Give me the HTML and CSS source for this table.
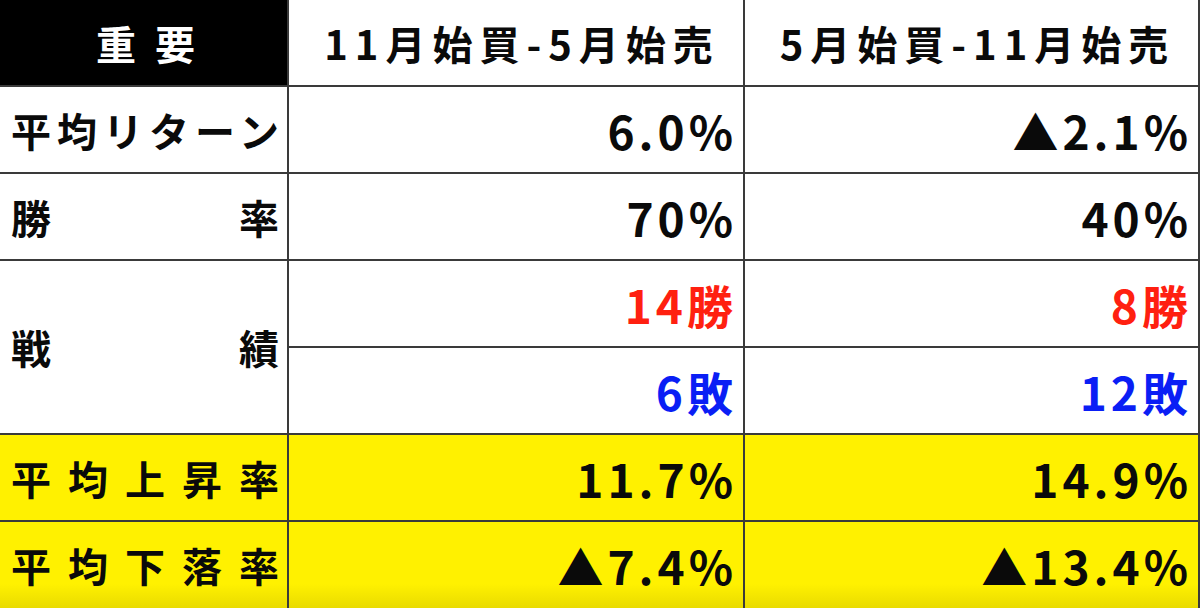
FILE: index.html
```html
<!DOCTYPE html>
<html lang="ja">
<head>
<meta charset="utf-8">
<title>重要</title>
<link rel="stylesheet" href="styles.css">
</head>
<body>
<div class="table">
  <div class="cell head-dark">重要</div>
  <div class="cell head">11月始買-5月始売</div>
  <div class="cell head">5月始買-11月始売</div>

  <div class="cell label"><span class="dist">平均リターン</span></div>
  <div class="cell value">6.0%</div>
  <div class="cell value">▲2.1%</div>

  <div class="cell label"><span class="dist">勝率</span></div>
  <div class="cell value">70%</div>
  <div class="cell value">40%</div>

  <div class="cell label span2"><span class="dist">戦績</span></div>
  <div class="cell value win">14勝</div>
  <div class="cell value win">8勝</div>
  <div class="cell value loss">6敗</div>
  <div class="cell value loss">12敗</div>

  <div class="cell label yellow"><span class="dist">平均上昇率</span></div>
  <div class="cell value yellow">11.7%</div>
  <div class="cell value yellow">14.9%</div>

  <div class="cell label yellow last"><span class="dist">平均下落率</span></div>
  <div class="cell value yellow last">▲7.4%</div>
  <div class="cell value yellow last">▲13.4%</div>
</div>
</body>
</html>
```

FILE: styles.css
```css
html, body {
  margin: 0;
  padding: 0;
  background: #ffffff;
}

body {
  width: 1200px;
  height: 608px;
  overflow: hidden;
  font-family: "Noto Sans CJK JP", "Noto Sans", sans-serif;
  font-weight: 700;
  color: #0a0a0a;
}

.table {
  display: grid;
  grid-template-columns: 287px 454px 453px;
  grid-template-rows: 85px 85px 85px 85px 85px 85px 86px;
  column-gap: 2px;
  row-gap: 2px;
  width: 1198px;
  height: 608px;
  padding-right: 2px;
  background: #3a3a3a;
}

.cell {
  background: #ffffff;
  display: flex;
  align-items: center;
  box-sizing: border-box;
  line-height: 1;
}

.head-dark {
  background: #000000;
  color: #ffffff;
  font-size: 40px;
  justify-content: center;
  letter-spacing: 19px;
  padding-left: 23px;
}

.head {
  font-size: 40px;
  justify-content: center;
  letter-spacing: 7px;
  padding-left: 12px;
}

.label {
  font-size: 40px;
  padding: 0 8px 0 11px;
}

.dist {
  display: block;
  width: 100%;
  text-align: justify;
  text-align-last: justify;
  text-justify: inter-character;
}

.span2 {
  grid-row: span 2;
}

.value {
  font-size: 46px;
  justify-content: flex-end;
  letter-spacing: 4px;
  padding-right: 6px;
}

.win {
  color: #ff2010;
}

.loss {
  color: #0a1ef5;
}

.yellow {
  background: #fff100;
}

.yellow.last {
  background: linear-gradient(to bottom, #fff100 0%, #fff100 72%, #e9db00 100%);
}
```
